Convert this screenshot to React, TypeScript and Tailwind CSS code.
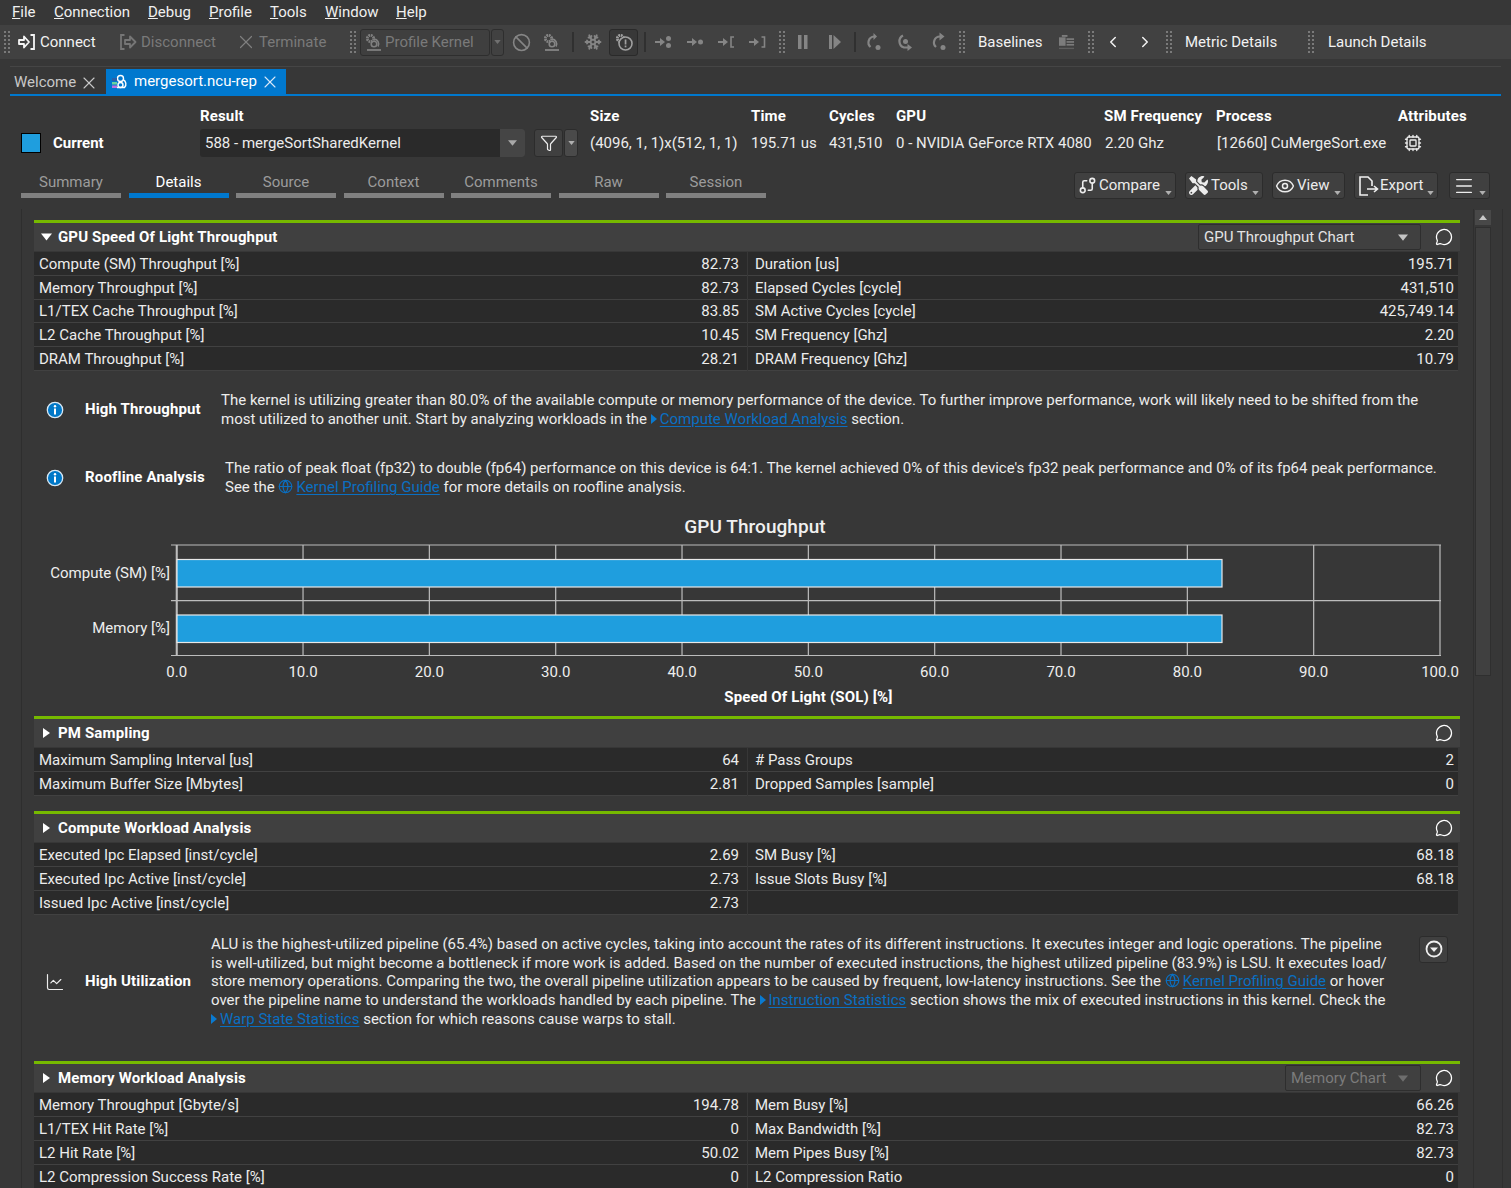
import React from "react";
import { X, Ban, Snowflake, ChevronLeft, ChevronRight, GitCompare, Eye, Menu, Cpu, MessageCircle, Globe, ChartLine, Funnel } from "lucide-react";
import { FaTools } from "react-icons/fa";

const Caret = ({ c = "#bdbdbd", s = 8 }: { c?: string; s?: number }) => (
  <svg width={s} height={s - 3} viewBox="0 0 8 5"><path d="M0 0h8L4 5z" fill={c} /></svg>
);

const Grip = ({ w = 18 }: { w?: number }) => (
  <div className="flex h-full items-center justify-center shrink-0" style={{ width: w }}>
    <svg width="6" height="22" viewBox="0 0 6 22">
      {[0, 4, 8, 12, 16, 20].map((y) => (
        <g key={y} fill="#7a7a7a">
          <rect x="0" y={y} width="2" height="2" />
          <rect x="4" y={y} width="2" height="2" />
        </g>
      ))}
    </svg>
  </div>
);

const Slot = ({ w, children }: { w: number; children?: React.ReactNode }) => (
  <div className="flex h-full items-center justify-center shrink-0" style={{ width: w }}>{children}</div>
);

const Sep = () => <div className="h-[20px] w-[2px] bg-[#303030]" />;

const StepIcon = ({ k }: { k: number }) => (
  <svg width="18" height="14" viewBox="0 0 18 14" fill="none" stroke="#858585" strokeWidth="2">
    <path d="M1 7h7" />
    <path d="M6 3l5 4-5 4z" fill="#858585" stroke="none" />
    {k === 0 && <g fill="#858585" stroke="none"><circle cx="14.500" cy="3.500" r="2.500" /><circle cx="14.500" cy="10.500" r="2.500" /></g>}
    {k === 1 && <circle cx="14.500" cy="7" r="2.500" fill="#858585" stroke="none" />}
    {k === 2 && <path d="M17 2h-3v10h3" strokeWidth="1.600" />}
    {k === 3 && <path d="M13.500 2h3v10h-3" strokeWidth="1.600" />}
  </svg>
);

const CurveIcon = ({ k }: { k: number }) => (
  <svg width="20" height="20" viewBox="0 0 20 20" fill="none" stroke="#858585" strokeWidth="2.200">
    {k === 0 && <><path d="M10 4.500A6 6 0 0 0 6.500 15" /><path d="M9.500 1v7L13 4.500z" fill="#858585" stroke="none" /><circle cx="14" cy="15.500" r="2.500" fill="#858585" stroke="none" /></>}
    {k === 1 && <><path d="M8 3.500A6.500 6.500 0 0 0 9 15.500h4" /><path d="M12.500 12l4.500 3.500-4.500 3.500z" fill="#858585" stroke="none" /><circle cx="10.500" cy="9.500" r="2.500" fill="#858585" stroke="none" /></>}
    {k === 2 && <><path d="M12 4.500A6 6 0 0 0 8 15" /><path d="M11.500 0.500l5 4-5 4z" fill="#858585" stroke="none" /><circle cx="15" cy="15.500" r="2.500" fill="#858585" stroke="none" /></>}
  </svg>
);

const MicroGear = ({ c = "#858585", alert }: { c?: string; alert?: boolean }) => (
  <svg width="20" height="20" viewBox="0 0 20 20" fill="none" stroke={c} strokeWidth="1.600">
    <circle cx="6.500" cy="6.500" r="3.200" strokeWidth="2.800" strokeDasharray="1.800 0.700" />
    {alert ? (
      <>
        <circle cx="11.500" cy="11.500" r="6.500" fill="#383838" />
        <rect x="10.700" y="7.500" width="1.700" height="5" fill={c} stroke="none" />
        <rect x="10.700" y="13.500" width="1.700" height="1.800" fill={c} stroke="none" />
      </>
    ) : (
      <>
        <path d="M10 7a5 5 0 0 1 4 7.500" />
        <circle cx="10" cy="12" r="2.800" />
        <path d="M3 18h14" strokeWidth="1.800" />
      </>
    )}
  </svg>
);

const ConnectIcon = ({ c }: { c: string }) => (
  <svg width="18" height="18" viewBox="0 0 18 18" fill="none" stroke={c} strokeWidth="1.800">
    <path d="M1 7h5V3.500L11 9l-5 5.500V11H1z" strokeLinejoin="round" />
    <path d="M12.500 2H16v14h-3.500" />
  </svg>
);

const DisconnectIcon = ({ c }: { c: string }) => (
  <svg width="18" height="18" viewBox="0 0 18 18" fill="none" stroke={c} strokeWidth="1.800">
    <path d="M5.500 2H2v14h3.500" />
    <path d="M6 7h5V3.500L16.500 9 11 14.500V11H6z" strokeLinejoin="round" />
  </svg>
);

const BaselineIcon = () => (
  <svg width="17" height="17" viewBox="0 0 17 17" fill="#7c7c7c">
    <rect x="3" y="0.500" width="6" height="2" />
    <rect x="0" y="3" width="7" height="9" />
    <rect x="8" y="4" width="8" height="1.800" />
    <rect x="8" y="7" width="8" height="1.800" />
    <rect x="8" y="10" width="8" height="1.800" />
    <rect x="0" y="14" width="16" height="1.500" fill="#5e5e5e" />
  </svg>
);

const TabIcon = () => (
  <svg width="18" height="18" viewBox="0 0 18 18" fill="none" stroke="#fff" strokeWidth="1.400">
    <circle cx="9.500" cy="5.500" r="3" />
    <path d="M12 6.500a5 5 0 0 1 1.500 8H6" />
    <circle cx="9.500" cy="12" r="2.500" />
    <rect x="1" y="5" width="5" height="3" fill="#2a5fa8" stroke="none" />
    <rect x="1" y="9" width="5" height="2.500" fill="#69d2a0" stroke="none" />
    <rect x="1" y="12.500" width="5" height="2.500" fill="#c070e0" stroke="none" />
  </svg>
);

const CompareIcon = () => <GitCompare size={19} strokeWidth={2} className="-scale-x-100" />;

const ExportIcon = () => (
  <svg width="22" height="22" viewBox="0 0 22 22" fill="none" stroke="#f0f0f0" strokeWidth="1.600" className="-ml-[1px] -mr-[1px]">
    <path d="M11 20H3V2h8l4 4v5" />
    <path d="M10 14h10M17 11l3.500 3-3.500 3" />
  </svg>
);

const InfoIcon = () => (
  <svg width="18" height="18" viewBox="0 0 18 18">
    <circle cx="9" cy="9" r="7.700" fill="#0078c8" stroke="#d8e8f4" strokeWidth="1.300" />
    <rect x="8" y="7.500" width="2" height="6" fill="#fff" />
    <circle cx="9" cy="5.200" r="1.200" fill="#fff" />
  </svg>
);

const DocLink = ({ children, globe }: { children: React.ReactNode; globe?: boolean }) => (
  <span className="text-[#0a6fc2] underline underline-offset-2">
    {globe ? <Globe size={15} className="inline mr-[3px] align-[-2px]" strokeWidth={1.800} /> : <span className="inline-block mr-[3px] align-[0px] w-0 h-0 border-y-[5.500px] border-y-transparent border-l-[6px] border-l-[#0a7ad0]" />}
    {children}
  </span>
);

const Cell = ({ label, value, right }: { label?: string; value?: string; right?: boolean }) => (
  <div className={`flex h-full items-center justify-between bg-[#2a2a2a] border-b border-[#414141] pt-[2px] ${right ? "pl-[7px] pr-[4px]" : "pl-[5px] pr-[8px]"}`}>
    <span>{label}</span>
    <span>{value}</span>
  </div>
);

const Rows = ({ rows, tight }: { rows: [string, string, string?, string?][]; tight?: boolean }) => (
  <div className="mt-px">
    {rows.map((r, i) => (
      <div key={i} className={`grid grid-cols-[713px_710px] gap-x-px ${tight ? "h-[23.750px]" : "h-6"}`}>
        <Cell label={r[0]} value={r[1]} />
        <Cell right label={r[2]} value={r[3]} />
      </div>
    ))}
  </div>
);

const Header = ({ title, open, combo, comboW, disabled }: { title: string; open?: boolean; combo?: string; comboW?: number; disabled?: boolean }) => (
  <div className={`border-t-[3px] border-[#76b900] bg-[#404040] h-[31px] flex items-center pl-[6px] pr-[7px] ${open ? "" : "pt-px"}`}>
    {open ? (
      <span className="mr-[6px] w-[12px] flex justify-center"><Caret c="#fff" s={11} /></span>
    ) : (
      <span className="mr-[6px] w-[12px] flex justify-center"><span className="w-0 h-0 border-y-[5px] border-y-transparent border-l-[7px] border-l-white" /></span>
    )}
    <span className="font-bold text-white tracking-[0.15px]">{title}</span>
    {combo && (
      <div className={`ml-auto h-[26px] flex items-center justify-between pl-[5px] pr-[12px] rounded-[2px] border border-[#2e2e2e] ${disabled ? "text-[#7c7c7c]" : "text-[#e4e4e4]"}`} style={{ width: comboW }}>
        <span>{combo}</span>
        <Caret c={disabled ? "#6e6e6e" : "#c4c4c4"} s={10} />
      </div>
    )}
    <MessageCircle size={18} strokeWidth={1.700} className={`text-white -mt-px ${combo ? "ml-[14px]" : "ml-auto"}`} />
  </div>
);

const ToolBtn = ({ w, icon, label }: { w: number; icon: React.ReactNode; label?: string }) => (
  <div className="relative h-[27px] flex items-center pl-[3px] gap-[2px] bg-[#404040] border border-[#2c2c2c] rounded-[3px] shrink-0" style={{ width: w }}>
    {icon}
    <span className="text-[#ececec]">{label}</span>
    <span className="absolute right-[3px] bottom-[3px]"><Caret c="#b0b0b0" s={7} /></span>
  </div>
);

const Chart = () => {
  const xs = Array.from({ length: 11 }, (_, i) => 176.700 + i * 126.330);
  return (
    <svg viewBox="34 510 1426 206" width="1426" height="206" className="block">
      {xs.map((x) => <line key={x} x1={x} x2={x} y1="545" y2="655.500" stroke="#bcbcbc" strokeWidth="1.200" />)}
      {[545, 600.700, 655.500].map((y) => <line key={y} x1="171" x2="1441" y1={y} y2={y} stroke="#bcbcbc" strokeWidth="1.200" />)}
      <line x1="176.700" x2="176.700" y1="545" y2="655.500" stroke="#bcbcbc" strokeWidth="2" />
      {[559.500, 615].map((y) => <rect key={y} x="177" y={y} width="1045" height="27.500" fill="#1f9ede" stroke="#e8e8e8" strokeWidth="1.200" />)}
      <g fontFamily="Roboto" fontSize="15" fill="#eeeeee">
        <text x="170" y="578" textAnchor="end">Compute (SM) [%]</text>
        <text x="170" y="633" textAnchor="end">Memory [%]</text>
        {xs.map((x, i) => <text key={i} x={x} y="677" textAnchor="middle">{(i * 10).toFixed(1)}</text>)}
        <text x="808.500" y="702" textAnchor="middle" fontWeight="700" fill="#fff" letterSpacing="0.15">Speed Of Light (SOL) [%]</text>
        <text x="755" y="533" textAnchor="middle" fontWeight="500" fontSize="19" fill="#f0f0f0" letterSpacing="0.05">GPU Throughput</text>
      </g>
    </svg>
  );
};

export default function App() {
  const menu: [string, string, number][] = [["F", "ile", 42], ["C", "onnection", 94], ["D", "ebug", 61], ["P", "rofile", 61], ["T", "ools", 55], ["W", "indow", 71], ["H", "elp", 40]];
  const headings: string[] = ["", "Result", "Size", "Time", "Cycles", "GPU", "SM Frequency", "Process", "Attributes"];
  const tabs = ["Summary", "Details", "Source", "Context", "Comments", "Raw", "Session"];
  return (
    <div className="w-[1511px] h-[1188px] overflow-hidden bg-[#373737] font-['Roboto',sans-serif] text-[15px] leading-[18.800px] text-[#ececec]">
      <div className="h-[25px] flex items-center pl-[12px] text-[#f0f0f0]">
        {menu.map(([a, b, w]) => (
          <span key={a} className="shrink-0" style={{ width: w }}><u>{a}</u>{b}</span>
        ))}
      </div>

      <div className="h-[34px] bg-[#414141] flex items-center text-[#f2f2f2]">
        <Grip w={14} />
        <Slot w={26}><ConnectIcon c="#f5f5f5" /></Slot>
        <span className="w-[74px] shrink-0">Connect</span>
        <Slot w={28}><DisconnectIcon c="#767676" /></Slot>
        <span className="w-[96px] shrink-0 text-[#7a7a7a] -ml-[1px]">Disconnect</span>
        <Slot w={18}><X size={22} strokeWidth={1.300} className="text-[#7f7f7f] shrink-0" /></Slot>
        <span className="w-[85px] shrink-0 ml-[4px] text-[#7a7a7a]">Terminate</span>
        <Grip w={18} />
        <div className="-ml-[2px] h-[27px] w-[130px] flex items-center gap-[1px] pl-[3px] border border-[#2e2e2e] rounded-[3px] bg-[#3f3f3f] text-[#7a7a7a] shrink-0">
          <MicroGear c="#7f7f7f" />
          <span>Profile Kernel</span>
        </div>
        <div className="ml-[1px] h-[27px] w-[13px] flex items-center justify-center border border-[#2e2e2e] rounded-[3px] shrink-0"><Caret c="#707070" s={7} /></div>
        <Slot w={34}><Ban size={19} className="text-[#858585]" /></Slot>
        <Slot w={27}><MicroGear /></Slot>
        <Slot w={16}><Sep /></Slot>
        <Slot w={23}><Snowflake size={18} className="text-[#858585]" strokeWidth={2.400} /></Slot>
        <div className="ml-[5px] h-[27px] w-[29px] flex items-center justify-center border border-[#2a2a2a] rounded-[3px] bg-[#383838] shrink-0"><MicroGear c="#a0a0a0" alert /></div>
        <Slot w={13}><Sep /></Slot>
        <Slot w={24}><StepIcon k={0} /></Slot>
        <Slot w={39}><StepIcon k={1} /></Slot>
        <Slot w={23}><StepIcon k={2} /></Slot>
        <Slot w={40}><StepIcon k={3} /></Slot>
        <Grip w={10} />
        <Slot w={32}>
          <svg width="12" height="16" viewBox="0 0 12 16" fill="#858585"><rect x="1" y="1" width="3.500" height="14" /><rect x="7" y="1" width="3.500" height="14" /></svg>
        </Slot>
        <Slot w={32}>
          <svg width="14" height="16" viewBox="0 0 14 16"><rect x="1" y="1" width="3" height="14" fill="#858585" /><path d="M5.500 1 13 8l-7.500 7z" fill="#858585" /></svg>
        </Slot>
        <Slot w={8}><Sep /></Slot>
        <Slot w={30}><CurveIcon k={0} /></Slot>
        <Slot w={32}><CurveIcon k={1} /></Slot>
        <Slot w={33}><CurveIcon k={2} /></Slot>
        <Grip w={16} />
        <span className="w-[89px] shrink-0 pl-[8px]">Baselines</span>
        <Slot w={16}><BaselineIcon /></Slot>
        <Grip w={32} />
        <Slot w={12}><ChevronLeft size={18} className="shrink-0" /></Slot>
        <div className="w-[8px] shrink-0" />
        <Slot w={36}><ChevronRight size={18} /></Slot>
        <Grip w={12} />
        <span className="w-[130px] shrink-0 pl-[10px]">Metric Details</span>
        <Grip w={12} />
        <span className="shrink-0 pl-[11px]">Launch Details</span>
      </div>

      <div className="ml-[10px] w-[1491px] mt-[7px] pt-[2px] border-t border-[#454545] h-[29px]">
        <div className="h-[25px] flex items-stretch">
          <div className="w-[96px] flex items-center pl-[4px] text-[#c8c8c8] pt-[2px]">Welcome<X size={20} strokeWidth={1.300} className="ml-[3px]" /></div>
          <div className="w-[180px] flex items-center bg-[#0078ce] pl-[5px] text-white">
            <TabIcon />
            <span className="ml-[5px]">mergesort.ncu-rep</span>
            <X size={20} strokeWidth={1.300} className="ml-[3px] text-[#d8e8f8]" />
          </div>
        </div>
        <div className="h-[2px] bg-[#0078ce]" />
      </div>

      <div className="ml-[21px] mt-[9px] grid grid-cols-[179px_390px_161px_78px_67px_208px_112px_182px_90px] grid-rows-[25px_28px]">
        {headings.map((h) => (
          <div key={h || "empty"} className="font-bold text-white tracking-[0.15px] flex items-center whitespace-nowrap">{h}</div>
        ))}
        <div className="flex items-center">
          <div className="w-[20px] h-[20px] bg-[#1f9ede] border border-black" />
          <span className="ml-[12px] font-bold text-white">Current</span>
        </div>
        <div className="flex items-center">
          <div className="w-[325px] h-[28px] bg-[#2a2a2a] rounded-[3px] flex items-center pl-[5px] pt-px relative">
            <span>588 - mergeSortSharedKernel</span>
            <span className="absolute right-0 top-0 bottom-0 w-[25px] bg-[#454545] rounded-r-[3px] flex items-center justify-center"><Caret c="#a8a8a8" s={9} /></span>
          </div>
          <div className="ml-[9px] w-[29px] h-[28px] bg-[#404040] border border-[#2c2c2c] rounded-[3px] flex items-center justify-center"><Funnel size={18} strokeWidth={1.600} /></div>
          <div className="ml-[1px] w-[14px] h-[28px] bg-[#4a4a4a] border border-[#2c2c2c] rounded-[3px] flex items-center justify-center"><Caret c="#b0b0b0" s={7} /></div>
        </div>
        <div className="flex items-center whitespace-nowrap">(4096, 1, 1)x(512, 1, 1)</div>
        <div className="flex items-center">195.71 us</div>
        <div className="flex items-center">431,510</div>
        <div className="flex items-center whitespace-nowrap">0 - NVIDIA GeForce RTX 4080</div>
        <div className="flex items-center pl-px">2.20 Ghz</div>
        <div className="flex items-center pl-px whitespace-nowrap">[12660] CuMergeSort.exe</div>
        <div className="flex items-center pl-[6px]"><Cpu size={18} strokeWidth={1.800} /></div>
      </div>

      <div className="ml-[21px] w-[1469px] mt-[15px] h-[28px] flex justify-between">
        <div className="flex gap-[7.500px]">
          {tabs.map((t) => (
            <div key={t} className={`w-[100px] h-[26px] flex flex-col items-center justify-between ${t === "Details" ? "text-white" : "text-[#9c9c9c]"}`}>
              <span className="mt-[1px]">{t}</span>
              <span className={`h-[5px] w-full ${t === "Details" ? "bg-[#0078ce]" : "bg-[#808080]"}`} />
            </div>
          ))}
        </div>
        <div className="flex gap-[9px]">
          <ToolBtn w={102} icon={<CompareIcon />} label="Compare" />
          <ToolBtn w={78} icon={<FaTools size={19} className="mr-[1px]" />} label="Tools" />
          <ToolBtn w={73} icon={<Eye size={20} strokeWidth={1.800} className="-ml-px" />} label="View" />
          <ToolBtn w={84} icon={<ExportIcon />} label="Export" />
          <div className="ml-[2px]"><ToolBtn w={41} icon={<Menu size={22} strokeWidth={1.500} />} /></div>
        </div>
      </div>

      <div className="ml-[21px] mt-[9px] flex h-[980px]">
        <div className="w-[1452px] border-l border-[#2e2e2e] pl-[12px] pt-[11px]">
          <div className="w-[1426px]">
            <Header open title="GPU Speed Of Light Throughput" combo="GPU Throughput Chart" comboW={223} />
            <Rows tight rows={[
              ["Compute (SM) Throughput [%]", "82.73", "Duration [us]", "195.71"],
              ["Memory Throughput [%]", "82.73", "Elapsed Cycles [cycle]", "431,510"],
              ["L1/TEX Cache Throughput [%]", "83.85", "SM Active Cycles [cycle]", "425,749.14"],
              ["L2 Cache Throughput [%]", "10.45", "SM Frequency [Ghz]", "2.20"],
              ["DRAM Throughput [%]", "28.21", "DRAM Frequency [Ghz]", "10.79"],
            ]} />
            <div className="mt-[21px] flex items-center h-[37px] whitespace-nowrap">
              <div className="w-[51px] pl-[12px]"><InfoIcon /></div>
              <div className="w-[136px] font-bold text-white tracking-[0.15px] -mt-[2px]">High Throughput</div>
              <div>
                <div>The kernel is utilizing greater than 80.0% of the available compute or memory performance of the device. To further improve performance, work will likely need to be shifted from the</div>
                <div>most utilized to another unit. Start by analyzing workloads in the <DocLink>Compute Workload Analysis</DocLink> section.</div>
              </div>
            </div>
            <div className="mt-[31px] flex items-center h-[37px] whitespace-nowrap">
              <div className="w-[51px] pl-[12px]"><InfoIcon /></div>
              <div className="w-[140px] font-bold text-white tracking-[0.15px] -mt-[2px]">Roofline Analysis</div>
              <div>
                <div>The ratio of peak float (fp32) to double (fp64) performance on this device is 64:1. The kernel achieved 0% of this device's fp32 peak performance and 0% of its fp64 peak performance.</div>
                <div>See the <DocLink globe>Kernel Profiling Guide</DocLink> for more details on roofline analysis.</div>
              </div>
            </div>
            <div className="mt-[13px]"><Chart /></div>

            <Header title="PM Sampling" />
            <Rows rows={[
              ["Maximum Sampling Interval [us]", "64", "# Pass Groups", "2"],
              ["Maximum Buffer Size [Mbytes]", "2.81", "Dropped Samples [sample]", "0"],
            ]} />
            <div className="h-[15px]" />

            <Header title="Compute Workload Analysis" />
            <Rows rows={[
              ["Executed Ipc Elapsed [inst/cycle]", "2.69", "SM Busy [%]", "68.18"],
              ["Executed Ipc Active [inst/cycle]", "2.73", "Issue Slots Busy [%]", "68.18"],
              ["Issued Ipc Active [inst/cycle]", "2.73"],
            ]} />
            <div className="mt-[20px] h-[126px] flex whitespace-nowrap">
              <div className="w-[51px] pl-[11px] h-[94px] flex items-center"><ChartLine size={20} strokeWidth={1.400} /></div>
              <div className="w-[126px] h-[94px] flex items-center font-bold text-white tracking-[0.15px]">High Utilization</div>
              <div className="w-[1208px]">
                <div>ALU is the highest-utilized pipeline (65.4%) based on active cycles, taking into account the rates of its different instructions. It executes integer and logic operations. The pipeline</div>
                <div>is well-utilized, but might become a bottleneck if more work is added. Based on the number of executed instructions, the highest utilized pipeline (83.9%) is LSU. It executes load/</div>
                <div>store memory operations. Comparing the two, the overall pipeline utilization appears to be caused by frequent, low-latency instructions. See the <DocLink globe>Kernel Profiling Guide</DocLink> or hover</div>
                <div>over the pipeline name to understand the workloads handled by each pipeline. The <DocLink>Instruction Statistics</DocLink> section shows the mix of executed instructions in this kernel. Check the</div>
                <div><DocLink>Warp State Statistics</DocLink> section for which reasons cause warps to stall.</div>
              </div>
              <div className="mt-[1px] w-[29px] h-[27px] bg-[#404040] border border-[#2c2c2c] rounded-[3px] flex items-center justify-center">
                <svg width="18" height="18" viewBox="0 0 18 18"><circle cx="9" cy="9" r="7.500" fill="none" stroke="#f0f0f0" strokeWidth="1.800" /><path d="M5 7.500h8L9 12z" fill="#f0f0f0" /></svg>
              </div>
            </div>

            <Header title="Memory Workload Analysis" combo="Memory Chart" comboW={136} disabled />
            <Rows rows={[
              ["Memory Throughput [Gbyte/s]", "194.78", "Mem Busy [%]", "66.26"],
              ["L1/TEX Hit Rate [%]", "0", "Max Bandwidth [%]", "82.73"],
              ["L2 Hit Rate [%]", "50.02", "Mem Pipes Busy [%]", "82.73"],
              ["L2 Compression Success Rate [%]", "0", "L2 Compression Ratio", "0"],
            ]} />
          </div>
        </div>
        <div className="w-[30px] border-x border-[#2f2f2f] pl-px">
          <div className="w-[16px] h-[15px] mt-[1px] bg-[#484848] flex items-center justify-center"><svg width="8" height="5" viewBox="0 0 8 5"><path d="M0 5h8L4 0z" fill="#c8c8c8" /></svg></div>
          <div className="w-[16px] h-[449px] mt-[2px] bg-[#404040] border border-[#2f2f2f]" />
        </div>
      </div>
    </div>
  );
}
